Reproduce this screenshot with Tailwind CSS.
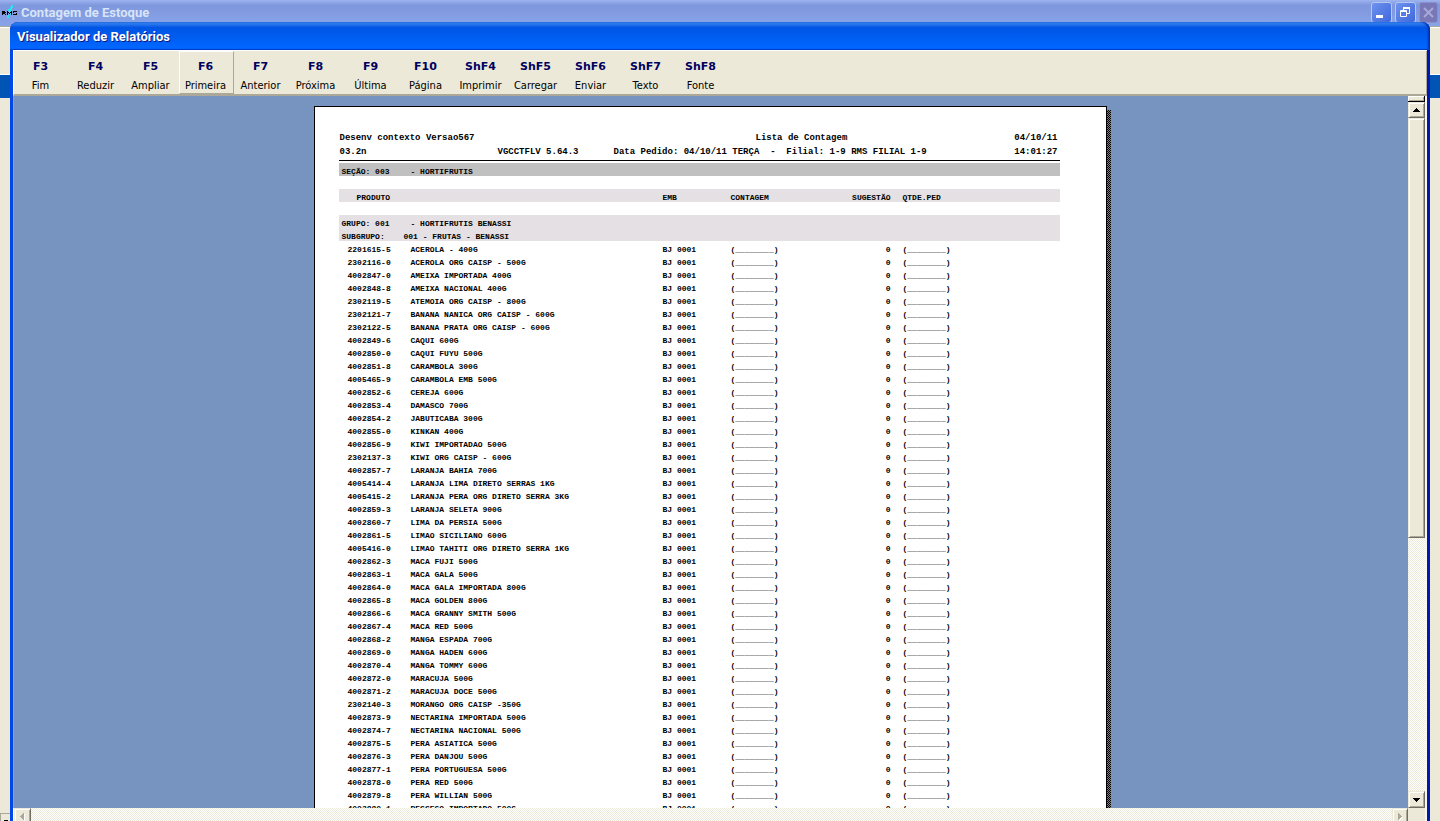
<!DOCTYPE html>
<html lang="pt-BR">
<head>
<meta charset="utf-8">
<title>Contagem de Estoque</title>
<script src="https://cdn.jsdelivr.net/npm/@tailwindcss/browser@4"></script>
</head>
<body class="bg-[#ece9d8]">
<div class="relative flex h-screen flex-col overflow-hidden bg-[#ece9d8] font-['DejaVu_Sans_Condensed','DejaVu_Sans',sans-serif] text-[11px] text-black">

  <!-- Main application window, inactive -->
  <header class="flex h-[26px] shrink-0 items-start justify-between bg-linear-to-b from-[#9db4f0] from-0% via-[#7f97dd] via-20% to-[#88a4e8] pl-[2px] pr-[2px]">
    <div class="flex h-[26px] items-center gap-[3px]">
      <svg class="h-4 w-4" viewBox="0 0 16 16" aria-hidden="true" shape-rendering="crispEdges">
        <path d="M9 0h2v3h-1v3H9v4H7v3H5v-3h2V6H6V4h2V2h1z" fill="#25e6f0"/>
        <path d="M0 6h3v1h1v1H3v1h1v1H3V9H1v1H0zM5 6h1v1h1v1h1V7h1V6h1v4H9V8H8v1H7V8H6v2H5zM11 6h4v1h-3v1h3v2h-4V9h3V8h-3z" fill="#000"/>
      </svg>
      <h1 class="font-['Roboto',sans-serif] text-[13px] font-bold leading-4 text-[#d8e4f8]">Contagem de Estoque</h1>
    </div>
    <div class="flex gap-[3px] pt-[2px]">
      <button aria-label="Minimizar" class="h-[21px] w-[21px] rounded-[3px] border border-[#b5c8f2] bg-linear-to-br from-[#6f92ee] to-[#3f67dc]">
        <svg class="h-[19px] w-[19px]" viewBox="0 0 19 19"><path d="M4 12h7v3H4z" fill="#fff"/></svg>
      </button>
      <button aria-label="Restaurar" class="h-[21px] w-[21px] rounded-[3px] border border-[#b5c8f2] bg-linear-to-br from-[#6f92ee] to-[#3f67dc]">
        <svg class="h-[19px] w-[19px]" viewBox="0 0 19 19" fill="none" stroke="#fff"><path d="M4.500 7.500h6v6h-6zM4 8.500h7M7.500 7V4.500h6v6H11M7 5.500h7M7 4.500h7" /></svg>
      </button>
      <button aria-label="Fechar" class="h-[21px] w-[19px] rounded-[3px] border border-[#8c8fc8] bg-[#7877b8]">
        <svg class="h-[19px] w-[17px]" viewBox="0 0 17 19"><path d="M4 5l9 9M13 5l-9 9" stroke="#a9a9d6" stroke-width="2"/></svg>
      </button>
    </div>
  </header>
  <div class="h-12 shrink-0 border-t border-[#aca899] shadow-[inset_0_1px_0_#fff]"></div>
  <div class="h-6 shrink-0 border-t border-white bg-[#0054b4]"></div>
  <div class="flex-1"></div>
  <div class="h-2 w-3 shrink-0 border-l border-t border-[#aca899] pl-[3px] pt-[6px]"><div class="h-px w-1 bg-black"></div></div>

  <!-- Report viewer window -->
  <main class="absolute inset-x-[10px] bottom-0 top-[22px] flex flex-col rounded-t-lg bg-[#0038d8]">
    <div class="flex h-7 shrink-0 items-center rounded-t-lg bg-linear-to-b from-[#3c8cf5] from-0% via-[#0054e3] via-20% to-[#0066ff] to-90% pl-[7px] shadow-[inset_0_-1px_0_#0040c8,inset_-2px_0_2px_#0030b0]">
      <h2 class="pt-[2px] font-['Roboto',sans-serif] text-[13px] font-bold leading-4 text-white [text-shadow:1px_1px_0_#0a1883]">Visualizador de Relatórios</h2>
    </div>
    <div class="flex min-h-0 flex-1 flex-col border-x-[3px] border-l-[#0048e8] border-r-[#0018b0] bg-[#ece9d8]">
      <nav class="flex h-[46px] shrink-0 border-b-2 border-l border-t border-b-[#aca899] border-l-white border-t-white shadow-[inset_-1px_0_0_#aca899]" aria-label="Ferramentas" id="tools"></nav>

      <div class="flex min-h-0 flex-1">
        <section class="flex min-w-0 flex-1 justify-center overflow-hidden border-l border-[#8ba4c8] bg-[#7794c0] pr-[2px] pt-[10px]" aria-label="Relatório">
          <div class="relative h-[1122px] w-[793px] shrink-0">
            <div class="absolute -right-1 bottom-0 top-1 w-1 bg-[#404040] bg-[repeating-conic-gradient(#000_0_25%,#808080_0_50%)] bg-[length:2px_2px]"></div>
            <article class="h-full border border-black bg-white pl-6 pr-[46px] pt-6 font-['Liberation_Mono',monospace] text-[8px] font-bold leading-[9px]">
              <div class="grid grid-cols-[158px_116px_142px_1fr_auto] border-b border-black pb-px pl-px pr-[2px] text-[9px] font-bold leading-[14px]">
                <span class="col-span-3">Desenv contexto Versao567</span>
                <span>Lista de Contagem</span>
                <span>04/10/11</span>
                <span>03.2n</span>
                <span>VGCCTFLV 5.64.3</span>
                <span class="col-span-2 whitespace-pre">Data Pedido: 04/10/11 TERÇA  -  Filial: 1-9 RMS FILIAL 1-9</span>
                <span>14:01:27</span>
              </div>
              <table class="mt-[2px] w-full table-fixed border-collapse whitespace-pre text-left">
                <colgroup><col class="w-[71px]"><col class="w-[252px]"><col class="w-[69px]"><col class="w-[100px]"><col class="w-[60px]"><col></colgroup>
                <tbody id="report">
                  <tr class="h-[13px] bg-[#c0c0c0]"><td class="p-0 pl-[3px] pt-1">SEÇÃO: 003</td><td class="p-0 pl-px pt-1" colspan="5">- HORTIFRUTIS</td></tr>
                  <tr class="h-[13px]"><td class="p-0" colspan="6"></td></tr>
                  <tr class="h-[13px] bg-[#e4e0e4]">
                    <th class="p-0 pl-[18px] pt-1" colspan="2">PRODUTO</th><th class="p-0 pl-px pt-1">EMB</th><th class="p-0 pt-1">CONTAGEM</th><th class="p-0 pt-1 text-right">SUGESTÃO</th><th class="p-0 pl-3 pt-1">QTDE.PED</th>
                  </tr>
                  <tr class="h-[13px]"><td class="p-0" colspan="6"></td></tr>
                  <tr class="h-[13px] bg-[#e4e0e4]"><td class="p-0 pl-[3px] pt-1">GRUPO: 001</td><td class="p-0 pl-px pt-1" colspan="5">- HORTIFRUTIS BENASSI</td></tr>
                  <tr class="h-[13px] bg-[#e4e0e4]"><td class="p-0 pl-[3px] pt-1" colspan="6"><div class="flex"><span class="w-[62px]">SUBGRUPO:</span><span>001 - FRUTAS - BENASSI</span></div></td></tr>
                </tbody>
              </table>
            </article>
          </div>
        </section>

        <div class="flex w-[19px] shrink-0 flex-col border-r-2 border-[#f8f6ee] bg-[#f6f4ec] bg-[repeating-conic-gradient(#fff_0_25%,#ece9d8_0_50%)] bg-[length:2px_2px]">
          <div class="h-[6px] shrink-0 border-b border-r border-black bg-[#ece9d8] shadow-[inset_1px_1px_0_#fff,inset_-1px_-1px_0_#aca899]"></div>
          <button aria-label="Rolar para cima" class="flex h-4 shrink-0 items-center justify-center border border-b-[#716f64] border-l-[#ece9d8] border-r-[#716f64] border-t-[#ece9d8] bg-[#ece9d8] shadow-[inset_1px_1px_0_#fff,inset_-1px_-1px_0_#aca899]">
            <svg class="h-1 w-[7px]" viewBox="0 0 7 4" shape-rendering="crispEdges"><path d="M3 0h1v1h1v1h1v1h1v1H0V3h1V2h1V1h1z"/></svg>
          </button>
          <div class="flex min-h-0 flex-1 flex-col">
            <button aria-label="Posição da rolagem" class="h-[62.4%] border border-b-[#716f64] border-l-[#ece9d8] border-r-[#716f64] border-t-[#ece9d8] bg-[#ece9d8] shadow-[inset_1px_1px_0_#fff,inset_-1px_-1px_0_#aca899]"></button>
          </div>
          <button aria-label="Rolar para baixo" class="flex h-[17px] shrink-0 items-center justify-center border border-b-[#716f64] border-l-[#ece9d8] border-r-[#716f64] border-t-[#ece9d8] bg-[#ece9d8] shadow-[inset_1px_1px_0_#fff,inset_-1px_-1px_0_#aca899]">
            <svg class="h-1 w-[7px]" viewBox="0 0 7 4" shape-rendering="crispEdges"><path d="M0 0h7v1H6v1H5v1H4v1H3V3H2V2H1V1H0z"/></svg>
          </button>
        </div>
      </div>

      <div class="flex h-[13px] shrink-0 items-start overflow-hidden">
        <div class="flex h-[17px] flex-1 justify-between border-l border-white bg-[#f6f4ec] bg-[repeating-conic-gradient(#fff_0_25%,#ece9d8_0_50%)] bg-[length:2px_2px]">
          <button disabled aria-label="Rolar para a esquerda" class="flex h-[17px] w-[17px] items-center justify-center border border-b-[#716f64] border-l-[#ece9d8] border-r-[#716f64] border-t-[#ece9d8] bg-[#ece9d8] shadow-[inset_1px_1px_0_#fff,inset_-1px_-1px_0_#aca899]">
            <svg class="h-2 w-[5px]" viewBox="0 0 5 8" shape-rendering="crispEdges"><path d="M4 1h1v7H4V7H3V6H2V5H1V4h1V3h1V2h1z" fill="#fff"/><path d="M3 0h1v7H3V6H2V5H1V4H0V3h1V2h1V1h1z" fill="#aca899"/></svg>
          </button>
          <button disabled aria-label="Rolar para a direita" class="flex h-[17px] w-4 items-center justify-center border border-b-[#716f64] border-l-[#ece9d8] border-r-[#716f64] border-t-[#ece9d8] bg-[#ece9d8] shadow-[inset_1px_1px_0_#fff,inset_-1px_-1px_0_#aca899]">
            <svg class="h-2 w-[5px]" viewBox="0 0 5 8" shape-rendering="crispEdges"><path d="M1 1h1v1h1v1h1v1h1v1H4v1H3v1H2v1H1z" fill="#fff"/><path d="M0 0h1v1h1v1h1v1h1v1H3v1H2v1H1v1H0z" fill="#aca899"/></svg>
          </button>
        </div>
        <div class="h-[17px] w-[19px] border-r-2 border-[#f8f6ee] bg-[#ece9d8]"></div>
      </div>
    </div>
  </main>
</div>

<script>
const tools = [["F3","Fim"],["F4","Reduzir"],["F5","Ampliar"],["F6","Primeira"],["F7","Anterior"],["F8","Próxima"],["F9","Última"],["F10","Página"],["ShF4","Imprimir"],["ShF5","Carregar"],["ShF6","Enviar"],["ShF7","Texto"],["ShF8","Fonte"]];
document.getElementById("tools").innerHTML = tools.map(([key, label]) => `
  <button class="flex w-[55px] flex-col items-center border pr-[2px] pt-2 ${key === "F6" ? "border-b-[#aca899] border-l-white border-r-[#aca899] border-t-white" : "border-transparent"}">
    <span class="font-['DejaVu_Sans',sans-serif] text-[11px] font-bold leading-[14px] text-[#000060]">${key}</span>
    <span class="pt-[5px] text-[11px] leading-[14px]">${label}</span>
  </button>`).join("");

const products = `2201615-5|ACEROLA - 400G
2302116-0|ACEROLA ORG CAISP - 500G
4002847-0|AMEIXA IMPORTADA 400G
4002848-8|AMEIXA NACIONAL 400G
2302119-5|ATEMOIA ORG CAISP - 800G
2302121-7|BANANA NANICA ORG CAISP - 600G
2302122-5|BANANA PRATA ORG CAISP - 600G
4002849-6|CAQUI 600G
4002850-0|CAQUI FUYU 500G
4002851-8|CARAMBOLA 300G
4005465-9|CARAMBOLA EMB 500G
4002852-6|CEREJA 600G
4002853-4|DAMASCO 700G
4002854-2|JABUTICABA 300G
4002855-0|KINKAN 400G
4002856-9|KIWI IMPORTADAO 500G
2302137-3|KIWI ORG CAISP - 600G
4002857-7|LARANJA BAHIA 700G
4005414-4|LARANJA LIMA DIRETO SERRAS 1KG
4005415-2|LARANJA PERA ORG DIRETO SERRA 3KG
4002859-3|LARANJA SELETA 900G
4002860-7|LIMA DA PERSIA 500G
4002861-5|LIMAO SICILIANO 600G
4005416-0|LIMAO TAHITI ORG DIRETO SERRA 1KG
4002862-3|MACA FUJI 500G
4002863-1|MACA GALA 500G
4002864-0|MACA GALA IMPORTADA 800G
4002865-8|MACA GOLDEN 800G
4002866-6|MACA GRANNY SMITH 500G
4002867-4|MACA RED 500G
4002868-2|MANGA ESPADA 700G
4002869-0|MANGA HADEN 600G
4002870-4|MANGA TOMMY 600G
4002872-0|MARACUJA 500G
4002871-2|MARACUJA DOCE 500G
2302140-3|MORANGO ORG CAISP -350G
4002873-9|NECTARINA IMPORTADA 500G
4002874-7|NECTARINA NACIONAL 500G
4002875-5|PERA ASIATICA 500G
4002876-3|PERA DANJOU 500G
4002877-1|PERA PORTUGUESA 500G
4002878-0|PERA RED 500G
4002879-8|PERA WILLIAN 500G
4002880-1|PESSEGO IMPORTADO 500G`.split("\n").map(l => l.split("|"));
document.getElementById("report").insertAdjacentHTML("beforeend", products.map(([code, name]) =>
  `<tr class="h-[13px]"><td class="p-0 pl-[9px] pt-1">${code}</td><td class="p-0 pl-px pt-1">${name}</td><td class="p-0 pl-px pt-1">BJ 0001</td><td class="p-0 pt-1">(________)</td><td class="p-0 pt-1 text-right">0</td><td class="p-0 pl-3 pt-1">(________)</td></tr>`).join(""));
</script>
</body>
</html>
